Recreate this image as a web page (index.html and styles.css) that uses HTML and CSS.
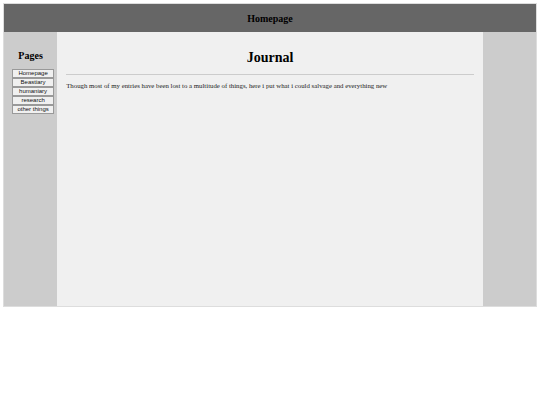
FILE: index.html
```html
<!DOCTYPE html>
<html lang="en">
  <head>
    <meta charset="UTF-8" />
    <meta name="viewport" content="width=device-width, initial-scale=1.0" />
    <title>Homepage</title>
    <link rel="stylesheet" href="styles.css">
  </head>
  <body>
    <div class="page">
      <header class="top-bar">
        <h1>Homepage</h1>
      </header>

      <div class="layout">
        <nav class="sidebar">
          <h2>Pages</h2>
          <div class="nav-list">
            <button class="nav-btn">Homepage</button>
            <button class="nav-btn">Beastiary</button>
            <button class="nav-btn">humaniary</button>
            <button class="nav-btn">research</button>
            <button class="nav-btn">other things</button>
          </div>
        </nav>

        <main class="content">
          <h2>Journal</h2>
          <hr />
          <p>Though most of my entries have been lost to a multitude of things, here i put what i could salvage and everything new</p>
        </main>

        <aside class="sidebar"></aside>
      </div>
    </div>
  </body>
</html>
```

FILE: styles.css
```css
body {
  margin: 3px;
  font-family: "Liberation Serif", "Times New Roman", serif;
  background-color: #fff;
  color: #000;
}

.page {
  border: 1px solid #ddd;
}

/* Header */
.top-bar {
  background-color: #666;
  height: 28px;
  display: flex;
  align-items: center;
  justify-content: center;
}

.top-bar h1 {
  margin: 0;
  font-size: 10px;
}

/* Three columns */
.layout {
  display: grid;
  grid-template-columns: 10% 80% 10%;
  height: 274px;
}

.sidebar {
  background-color: #ccc;
  display: flex;
  flex-direction: column;
  align-items: center;
}

.sidebar h2 {
  margin: 18px 0 8px;
  font-size: 10px;
}

.nav-list {
  display: flex;
  flex-direction: column;
  margin-left: 5px;
}

.nav-btn {
  width: 42px;
  height: 9px;
  padding: 0;
  margin: 0;
  border: 1px solid #999;
  background-color: #f0f0f0;
  font-family: "Liberation Sans", Arial, sans-serif;
  font-size: 6px;
  line-height: 7px;
  color: #111;
}

.content {
  background-color: #f0f0f0;
  padding: 0 9px;
}

.content h2 {
  margin: 18px 0 8px;
  text-align: center;
  font-size: 14px;
}

.content hr {
  margin: 0;
  border: none;
  border-top: 1px solid #ccc;
}

.content p {
  margin: 7px 0;
  font-size: 6.8px;
  color: #222;
}
```
